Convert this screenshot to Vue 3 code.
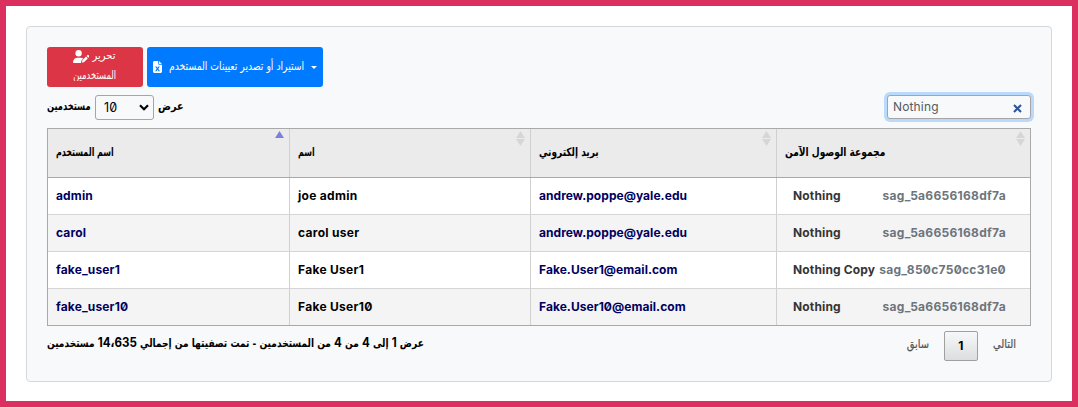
<script setup>
const columns = [
  { label: 'اسم المستخدم', sorted: true },
  { label: 'اسم' },
  { label: 'بريد إلكتروني' },
  { label: 'مجموعة الوصول الآمن' },
]
const users = [
  { name: 'admin', full: 'joe admin', email: 'andrew.poppe@yale.edu', group: 'Nothing', sag: 'sag_5a6656168df7a' },
  { name: 'carol', full: 'carol user', email: 'andrew.poppe@yale.edu', group: 'Nothing', sag: 'sag_5a6656168df7a' },
  { name: 'fake_user1', full: 'Fake User1', email: 'Fake.User1@email.com', group: 'Nothing Copy', sag: 'sag_850c750cc31e0' },
  { name: 'fake_user10', full: 'Fake User10', email: 'Fake.User10@email.com', group: 'Nothing', sag: 'sag_5a6656168df7a' },
]
</script>

<template>
  <main class="frame">
    <section class="card">
      <div class="actions">
        <button class="btn red">
          <span class="line" dir="rtl"><span class="ar edit">تحرير</span>
            <svg width="16" height="13" viewBox="0 0 640 512"><path fill="currentColor" d="M224 256a128 128 0 1 0 0-256 128 128 0 1 0 0 256zm-46 48C80 304 0 384 0 482c0 17 13 30 30 30h293c-3-9-4-19-1-28l15-60c3-11 8-21 16-29l60-60c-30-20-66-31-103-31h-132zM630 209c-16-16-41-16-57 0l-29 29 71 71 29-29c16-16 16-41 0-57l-14-14zM376 406c-4 4-7 9-8 15l-15 60c-3 12 8 22 19 19l60-15c6-1 11-4 15-8l146-146-71-71-146 146z"/></svg>
          </span>
          <span class="ar people">المستخدمين</span>
        </button>
        <button class="btn blue">
          <svg width="9" height="12" viewBox="0 0 384 512"><path fill="currentColor" fill-rule="evenodd" d="M64 0C29 0 0 29 0 64v384c0 35 29 64 64 64h256c35 0 64-29 64-64V160H256c-18 0-32-14-32-32V0H64zm192 0v128h128L256 0zM92 230h62l38 56 38-56h62l-68 98 72 104h-62l-42-62-42 62H88l72-104-68-98z"/></svg>
          <span class="ar imp" dir="rtl">استيراد أو تصدير تعيينات المستخدم</span>
          <i class="caret"></i>
        </button>
      </div>

      <div class="controls">
        <div class="length">
          <span class="ar b unit" dir="rtl">مستخدمين</span>
          <span class="select">10<svg width="10" height="7" viewBox="0 0 10 7"><path d="M1 1.200 5 5.200 9 1.200" fill="none" stroke="#000" stroke-width="2.200"/></svg></span>
          <span class="ar b show" dir="rtl">عرض</span>
        </div>
        <div class="search"><span>Nothing</span><svg width="9" height="9" viewBox="0 0 9 9"><path d="M1 1 8 8M8 1 1 8" fill="none" stroke="#2d569d" stroke-width="2.100"/></svg></div>
      </div>

      <div class="table">
        <div class="row head">
          <div v-for="(c, i) in columns" :key="i" class="cell">
            <span class="ar b" :class="'h' + i" dir="rtl">{{ c.label }}</span>
            <svg class="sort" width="9" height="15" viewBox="0 0 9 15"><path d="M4.500 0 9 7H0z" :fill="c.sorted ? '#7b80dc' : '#d6d6d6'"/><path v-if="!c.sorted" d="M0 8h9l-4.500 7z" fill="#d6d6d6"/></svg>
          </div>
        </div>
        <div v-for="u in users" :key="u.name" class="row">
          <div class="cell navy"><span>{{ u.name }}</span></div>
          <div class="cell full"><span>{{ u.full }}</span></div>
          <div class="cell navy mail"><span>{{ u.email }}</span></div>
          <div class="cell group"><span>{{ u.group }}</span><span class="sag">{{ u.sag }}</span></div>
        </div>
      </div>

      <div class="footer">
        <div class="ar b info" dir="rtl">عرض <b>1</b> إلى <b>4</b> من <b>4</b> من المستخدمين - تمت تصفيتها من إجمالي <b>14،635</b> مستخدمين</div>
        <div class="pager">
          <span class="ar">سابق</span>
          <span class="page">1</span>
          <span class="ar">التالي</span>
        </div>
      </div>
    </section>
  </main>
</template>

<style>
body { margin: 0; }
</style>

<style scoped>
* { box-sizing: border-box; }
.frame {
  width: 1078px; height: 407px; padding: 20px; border: 6px solid #db305f;
  background: #fff; color: #000;
  font: 12px/20px Inter, "Liberation Sans", sans-serif;
  letter-spacing: .15px;
  font-feature-settings: "zero";
}
.card {
  width: 1026px; height: 356px; padding: 20px;
  border: 1px solid #d5d8dc; border-radius: 4px; background: #f8f9fb;
}
.ar {
  font-family: "DejaVu Sans Condensed", "DejaVu Sans", sans-serif; font-stretch: condensed;
  font-size: 10px; letter-spacing: 0; white-space: nowrap; transform-origin: left;
}
.b { font-weight: 700; }
.actions { display: flex; gap: 4px; height: 40px; }
.btn { border: 0; border-radius: 3px; color: #fff; padding: 0; font: inherit; }
.red { width: 96px; background: #dc3545; display: flex; flex-direction: column; align-items: flex-end; padding-right: 27px; }
.red > span { height: 18px; line-height: 20px; }
.line { display: flex; align-items: center; gap: 3px; }
.line .ar { width: 24px; }
.edit { font-size: 11px; }
.people { transform: scale(.93, 1.15); transform-origin: right; }
.blue { width: 176px; background: #007bff; display: flex; align-items: center; padding: 0 6px; }
.blue svg { flex: none; margin-top: -1px; }
.imp { margin-left: 7px; transform: scale(1.03, 1.15); }
.caret { margin-left: auto; border: 3px solid transparent; border-top-color: #fff; border-bottom: 0; }
.controls { display: flex; justify-content: space-between; margin-top: 8px; height: 25px; }
.length { display: flex; align-items: center; gap: 4px; height: 25px; }
.length .ar { margin-top: -2px; }
.unit { width: 44px; direction: ltr; transform: scale(.92, 1.15); }
.show { transform: scale(1.07, 1.15); }
.select {
  width: 59px; height: 25px; border: 1px solid #a5a5a5; border-radius: 3px; font-size: 12.5px;
  display: flex; align-items: center; justify-content: space-between; padding: 0 4px 0 8px;
}
.search {
  width: 144px; height: 24px; border: 1px solid #a5a5a5; border-radius: 3px;
  box-shadow: 0 0 0 3px #b9dafc; background: #f8f9fb; color: #555b61;
  display: flex; align-items: center; justify-content: space-between; padding: 0 8px 0 5px;
}
.search svg { margin-top: 3px; }
.table { width: 984px; margin-top: 8px; border: 1px solid #a9a9a9; }
.row { display: grid; grid-template-columns: 242px 241px 246px 253px; height: 37px; background: #fff; border-top: 1px solid #d5d5d5; }
.row:nth-child(odd) { background: #f4f4f4; }
.row.head { height: 48px; background: #ebebeb; border-top: 0; }
.head + .row { border-top-color: #a9a9a9; }
.cell { display: flex; align-items: center; padding-left: 8px; border-right: 1px solid #d0d0d0; position: relative; font-weight: 700; white-space: nowrap; }
.row:not(.head) .cell { padding-bottom: 1px; }
.cell:last-child { border-right: 0; }
.h0 { transform: scale(.88, 1.15); }
.h1 { transform: scale(.88, 1.15); }
.h2 { transform: scale(1, 1.15); }
.h3 { transform: scale(1.01, 1.15); }
.full { letter-spacing: .3px; }
.mail { letter-spacing: .05px; }
.navy { color: #000060; }
.sort { position: absolute; right: 5px; top: 2px; }
.row .group { padding-left: 16px; padding-right: 24px; justify-content: space-between; color: #343434; }
.sag { color: #6c757d; letter-spacing: .28px; }
.footer { display: flex; justify-content: space-between; margin-top: 5px; }
.info { height: 24px; line-height: 24px; transform: scale(1.005, 1.12); }
.info b { font-family: Inter, "DejaVu Sans", sans-serif; font-size: 11.5px; font-weight: 700; }
.pager { display: flex; align-items: center; height: 30px; color: #555; padding-right: 15px; gap: 15px; }
.pager .ar { font-size: 11px; margin-top: -3px; transform: scaleY(1.1); -webkit-text-stroke: .2px #555; }
.page {
  width: 34px; height: 30px; line-height: 28px; text-align: center; border: 1px solid #a0a0a0;
  border-radius: 2px; background: linear-gradient(#f7f8fa, #dcdddf); color: #000; font-weight: 700; font-size: 12px;
}
</style>
